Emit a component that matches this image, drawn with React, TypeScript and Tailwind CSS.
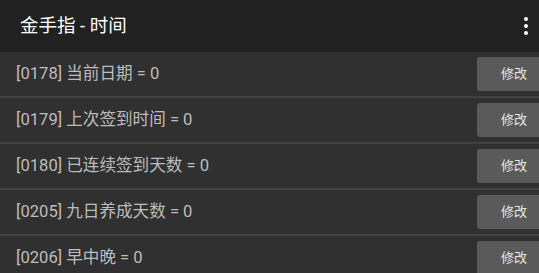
import React from "react";

const rows = [
  "[0178] 当前日期 = 0",
  "[0179] 上次签到时间 = 0",
  "[0180] 已连续签到天数 = 0",
  "[0205] 九日养成天数 = 0",
  "[0206] 早中晚 = 0",
];

export default function App() {
  return (
    <div
      className="w-[539px] h-[273px] overflow-hidden bg-[#303030]"
      style={{ fontFamily: 'Roboto, "Noto Sans CJK SC", sans-serif' }}
    >
      <div className="h-[52px] bg-[#212121] flex items-center justify-between pl-[20px] pr-[10px]">
        <span className="text-[18.5px] text-white leading-none">金手指 - 时间</span>
        <div className="flex flex-col items-center gap-[3px] w-[4px] mr-[1px]">
          <span className="block w-[4px] h-[4px] rounded-full bg-white" />
          <span className="block w-[4px] h-[4px] rounded-full bg-white" />
          <span className="block w-[4px] h-[4px] rounded-full bg-white" />
        </div>
      </div>
      <div className="w-[551px]">
        {rows.map((r) => (
          <div key={r}>
            <div className="h-[44px] flex items-center justify-between pl-[16px]">
              <span className="text-[16.6px] text-[#bdbdbd] leading-none">{r}</span>
              <button className="w-[74px] h-[34px] rounded-[3px] bg-[#5a5a5a] text-[13px] text-[#e6e6e6] flex items-center justify-center">
                修改
              </button>
            </div>
            <div className="h-[2px] bg-[#424242]" />
          </div>
        ))}
      </div>
    </div>
  );
}
